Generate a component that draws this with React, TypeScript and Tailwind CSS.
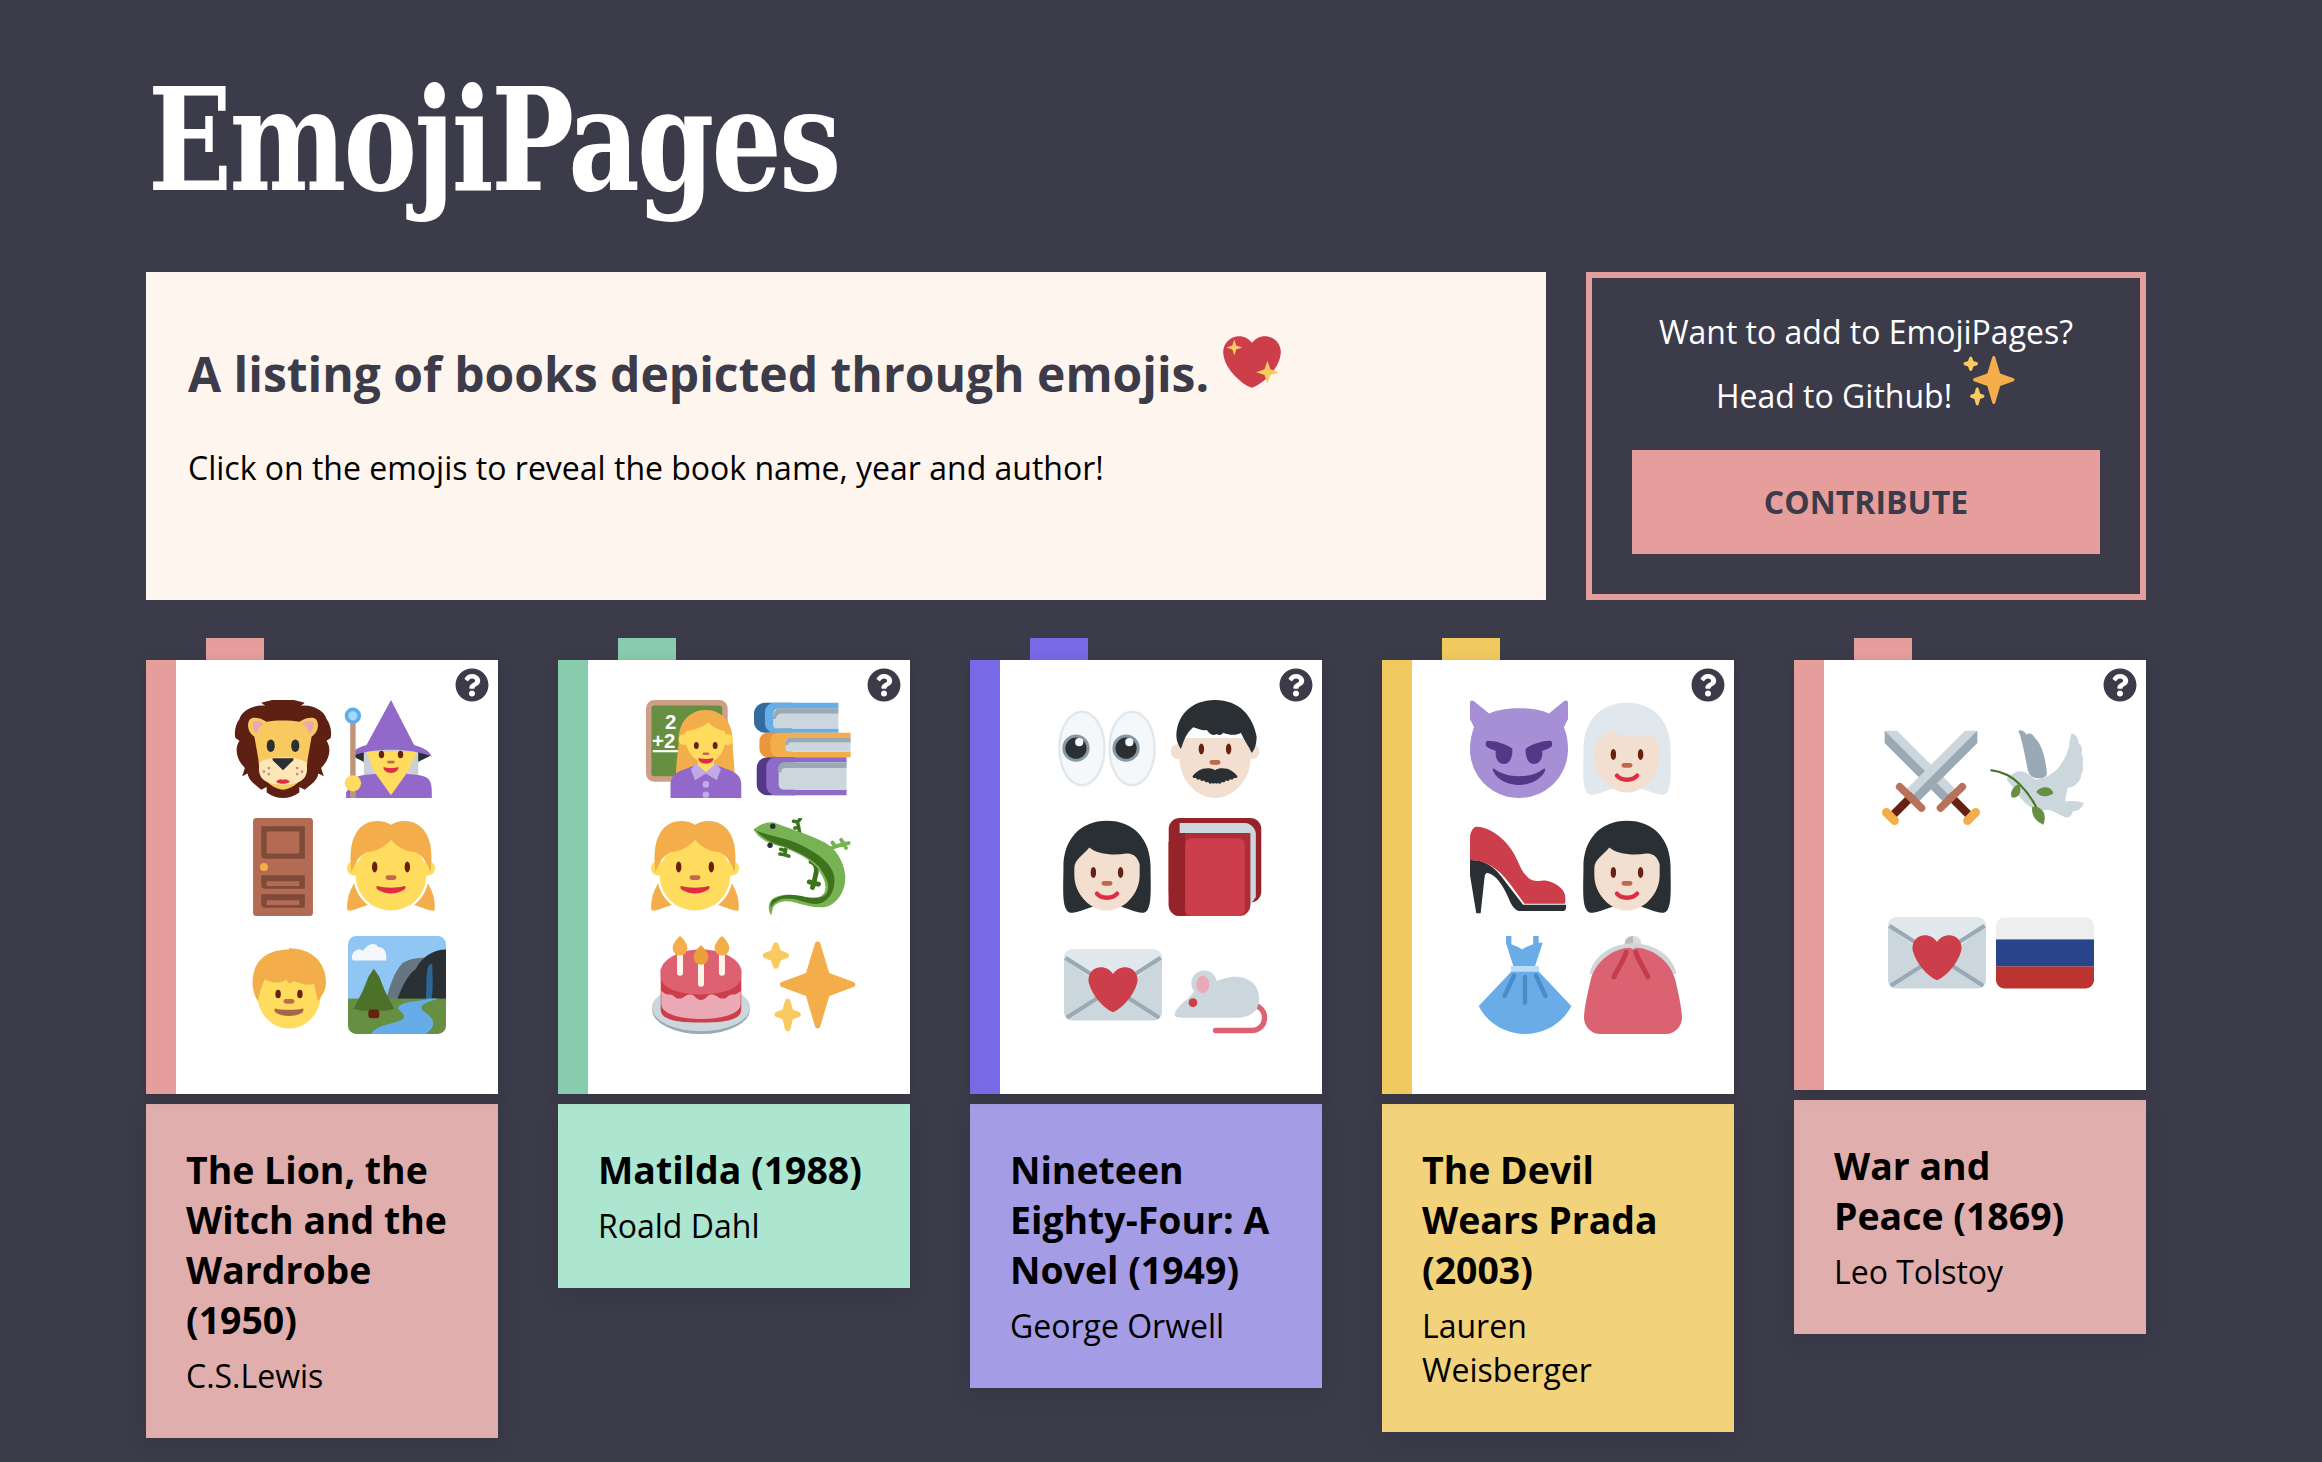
import { FaQuestionCircle } from 'react-icons/fa'
import type { ReactNode } from 'react'

const SKIN = '#F3DFD0'
const YELLOW = '#FFDC5D'
const ORANGE = '#F4AD4B'
const RED = '#CC3E4A'
const GREY = '#CCD6DD'
const DARK = '#292F33'
const BROWN = '#662113'

const bigStar = 'M34.347 16.893l-8.899-3.294-3.323-10.891c-.128-.42-.517-.708-.956-.708-.439 0-.828.288-.956.708l-3.322 10.891-8.9 3.294c-.393.146-.653.519-.653.938 0 .418.26.793.653.938l8.895 3.293 3.324 11.223c.126.424.516.715.959.715.442 0 .833-.291.959-.716l3.324-11.223 8.896-3.293c.391-.144.652-.518.652-.937 0-.418-.261-.792-.653-.938z'
const lowStar = 'M14.347 27.894l-2.314-.856-.9-3.3c-.118-.436-.513-.738-.964-.738-.451 0-.846.302-.965.737l-.9 3.3-2.313.856c-.393.145-.653.52-.653.938 0 .418.26.793.653.938l2.301.853.907 3.622c.112.444.511.756.97.756.459 0 .858-.312.97-.757l.907-3.622 2.301-.853c.393-.144.653-.519.653-.937 0-.418-.26-.793-.653-.938z'
const topStar = 'M10.009 6.231l-2.364-.875-.876-2.365c-.145-.393-.519-.653-.938-.653-.418 0-.792.26-.938.653l-.875 2.365-2.365.875c-.393.146-.653.52-.653.938 0 .418.26.793.653.938l2.365.875.875 2.365c.146.393.52.653.938.653.418 0 .792-.26.938-.653l.875-2.365 2.365-.875c.393-.146.653-.52.653-.938 0-.418-.26-.792-.653-.938z'

const woman = (hair: string) => (
  <>
    <path fill={hair} d="M18 1C8 1 2 8 2 18c0 6-.5 13 1 15.5 1 2 3 1.500 7 0l3-1h10l3 1c4 1.500 6 2 7 0 1.500-2.500 1-9.500 1-15.500C34 8 28 1 18 1z" />
    <path fill={SKIN} d="M11.500 10.800C14 13 20 14 25 13c2 0 4 .5 5 4v4c0 7-6 13-12 13S6 28 6 21v-2.500c0-3.500 3-4.500 5.500-7.700z" />
    <ellipse cx="13" cy="20" rx="1" ry="2" fill={BROWN} />
    <ellipse cx="23" cy="20" rx="1" ry="2" fill={BROWN} />
    <rect x="16" y="23.100" width="4" height="1.800" rx=".9" fill="#C1694F" />
    <path d="M14.300 27.800c1.700 2 5.700 2 7.400 0" fill="none" stroke="#DD2E44" strokeWidth="1.600" strokeLinecap="round" />
  </>
)

const girl = (
  <>
    <path fill={ORANGE} d="M4.500 24C2.500 27 1.600 31 2 34c2 .3 4-1 7.500-2C7 30 5 27 4.500 24z" />
    <path fill={ORANGE} d="M31.500 24c2 3 2.900 7 2.500 10-2 .3-4-1-7.500-2 2.500-2 4.500-5 5-8z" />
    <circle cx="4.500" cy="18.500" r="2.700" fill={YELLOW} />
    <circle cx="31.500" cy="18.500" r="2.700" fill={YELLOW} />
    <ellipse cx="18" cy="21" rx="13" ry="13" fill={YELLOW} />
    <path fill={ORANGE} d="M18 2.500C15 .5 8 0 5 6 3 9 2.800 15 3.500 20 4.500 17 6 14 9 12.500c3 0 6.500-1.500 9-4.500 2.500 3 6 4.500 9 4.500 3 1.500 4.500 4.500 5.500 7.500.7-5 .5-11-1.500-14-3-6-10-5.500-13-3.500z" />
    <ellipse cx="12" cy="18" rx="1" ry="2" fill={BROWN} />
    <ellipse cx="24" cy="18" rx="1" ry="2" fill={BROWN} />
    <rect x="16" y="21" width="4" height="1.800" rx=".9" fill="#C1694F" />
    <path fill="#DD2E44" d="M13 25c2.500.8 7.500.8 10 0 .5 0 .5 1-.2 1.400C20 28.200 16 28.200 13.200 26.400c-.7-.4-.7-1.400-.2-1.400z" />
  </>
)

const letter = (
  <>
    <rect x="0" y="5" width="36" height="26" rx="3" fill={GREY} />
    <path fill="#E1E8ED" d="M3 5h30a3 3 0 0 1 3 3L18 22 0 8a3 3 0 0 1 3-3z" />
    <path d="M.5 8l34.500 22M35.500 8L1 30" stroke="#99AAB5" strokeWidth="1.500" fill="none" />
    <path fill={RED} d="M27 16c0-2.500-2-4.500-4.500-4.500-1.800 0-3.600 1-4.500 2.500-.9-1.500-2.700-2.500-4.500-2.500C11 11.500 9 13.500 9 16c0 .5 0 1 .2 1.500C10.500 22 14.500 26.500 18 28c3.500-1.500 7.500-6 8.800-10.500.2-.5.2-1 .2-1.500z" />
  </>
)

const sword = (
  <>
    <path fill={GREY} d="M1 1h4.500L27 22.500 22.500 27 1 5.500z" />
    <path fill="#99AAB5" d="M1 5.500L22.500 27l2.200-2.200L3.200 3.200 1 1z" />
    <path stroke={BROWN} strokeWidth="3" d="M24.500 24.500l7.500 7.500" />
    <path stroke="#B8725C" strokeWidth="2.800" strokeLinecap="round" d="M21.500 29.400l8-7.800" />
    <path stroke={ORANGE} strokeWidth="3.200" strokeLinecap="round" d="M31.400 34l3-3" />
  </>
)

const emojis: Record<string, ReactNode> = {
  lion: (
    <>
      <path fill="#5F2014" d="M10 1l4-1h8l4 1-1.500 1.200C28 1.500 33 3.500 34 7c1.500 2 2 5 1.500 7L34 15c2 3 1 7-2 10l1 3-2-1c-.5 3-3 4-5 6l-2-1v2c-2 1.500-4 2-6 2s-4-.5-6-2v-2l-2 1c-2-2-4.500-3-5-6l-2 1 1-3C1 22 0 18 2 15L.5 14C0 12 .5 9 2 7c1-3.500 6-5.500 9.500-4.800z" />
      <path fill="#F7C95E" d="M6 7c1-1 4-.5 6 1 3-.6 9-.6 12 0 2-1.500 5-2 6-1 1.500 1.500 1 5-1.500 6.500L27 22c0 5-3 10-9 11-6-1-9-6-9-11L7.500 13.500C5 12 4.500 8.500 6 7z" />
      <path fill="#E8A9B4" d="M7 8c1-.6 3 0 4 .8-1.500.7-2.500 2.200-2.500 3.700C7 11.500 6.500 9 7 8zM29 8c-1-.6-3 0-4 .8 1.500.7 2.500 2.200 2.500 3.700C29 11.500 29.500 9 29 8z" />
      <path fill="#FDE7B7" d="M18 21c-3 0-7 .5-8.500 2-.9 3 0 6 2.500 7 2 1 4 1 6 1s4 0 6-1c2.500-1 3.400-4 2.500-7-1.500-1.500-5.500-2-8.500-2z" />
      <ellipse cx="13.500" cy="16.800" rx="1.500" ry="2.300" fill={DARK} />
      <ellipse cx="22.500" cy="16.800" rx="1.500" ry="2.300" fill={DARK} />
      <path fill={DARK} d="M14.500 21.400h7c.4 0 .5.500.2.800L18 25.800l-3.700-3.600c-.3-.3-.2-.8.2-.8z" />
      <path fill="#DD2E44" d="M15.500 30c1-1 2-1 2.500-.6.500-.4 1.500-.4 2.500.6-1 1-4 1-5 0z" />
      <g fill="#C98A7A">
        <circle cx="11" cy="26.300" r=".5" /><circle cx="12.800" cy="25" r=".5" /><circle cx="12.800" cy="27.200" r=".5" />
        <circle cx="25" cy="26.300" r=".5" /><circle cx="23.200" cy="25" r=".5" /><circle cx="23.200" cy="27.200" r=".5" />
      </g>
    </>
  ),
  wizard: (
    <>
      <path fill={DARK} d="M5 18.500h26l1.500 2-5 2.500H8.500l-5-2.500z" />
      <path fill="#CCD0D4" d="M8 17h20v11H8z" />
      <path fill="#9268CA" d="M5 28.500c2-1 5-1.300 8-1.300h10c3 0 6 .3 8 1.300 2 1.200 2 3.500 2 7.500H1.500v-2L5 28.500z" />
      <path fill={YELLOW} d="M9 19h18.500L24 26.500 18 35l-6-8.500z" />
      <path fill="#9268CA" d="M18 0l8.500 16.500c3 .8 6 2.500 6.500 4.300-4-1.500-9-2.500-15-2.500s-11 1-15 2.500C3.500 19 5.500 17.500 9 16.500z" />
      <rect x="3" y="7" width="2" height="29" fill="#C1957B" />
      <circle cx="4" cy="5.800" r="3" fill="#5DADEC" />
      <circle cx="4" cy="5.800" r="1.700" fill="#A5D8FA" />
      <circle cx="4" cy="30.600" r="3" fill={YELLOW} />
      <ellipse cx="14.500" cy="20" rx="1" ry="1.400" fill={BROWN} />
      <ellipse cx="21.500" cy="20" rx="1" ry="1.400" fill={BROWN} />
      <rect x="16.600" y="22.300" width="2.800" height="1" rx=".5" fill="#C1694F" />
      <path fill="#DD2E44" d="M15.300 24.600c1.500.5 4 .5 5.400 0 .3 1-1 2.200-2.700 2.200s-3-1.200-2.700-2.200z" />
    </>
  ),
  door: (
    <>
      <rect x="7" y="0" width="22" height="36" rx="1.200" fill="#B36B54" />
      <path fill="#7F4A38" d="M10 3h16v12H11.500a1.500 1.500 0 0 1-1.500-1.500zM10 21h16v5H11.500a1.500 1.500 0 0 1-1.500-1.500zM10 28h16v5H11.500a1.500 1.500 0 0 1-1.500-1.500z" />
      <path fill="#B36B54" d="M12 5h12v8H12zM12 23.200h12v1.800H12zM12 30.200h12v1.800H12z" />
      <circle cx="11" cy="18" r="1.500" fill={ORANGE} />
    </>
  ),
  girl,
  boy: (
    <>
      <ellipse cx="18" cy="21.500" rx="11.700" ry="12.500" fill={YELLOW} />
      <path fill={ORANGE} d="M18 5C9 5 4.600 10 4.600 17c0 3 1 5.500 2 7 .5-3 1.500-6 2.500-8 3 1.500 6 1.500 8 0 .5 2 2 1.500 2.500.5 2.500.8 5.500 2 7.500 1 .7 2.500 1.200 4.500 1.500 6.500 1.500-2 3-4 3-7 0-7-5-12.500-13.600-12.500z" />
      <ellipse cx="14" cy="21.300" rx="1" ry="1.600" fill={BROWN} />
      <ellipse cx="22" cy="21.300" rx="1" ry="1.600" fill={BROWN} />
      <rect x="16" y="23.100" width="4" height="1.800" rx=".9" fill="#C1694F" />
      <path fill="#A8654D" d="M13 26.600c2 .7 8 .7 10 0 .5 0 .4 1-.2 1.600-2.800 1.600-6.800 1.600-9.600 0-.6-.6-.7-1.600-.2-1.600z" />
    </>
  ),
  scenery: (
    <>
      <clipPath id="scenery-clip"><rect width="36" height="36" rx="3" /></clipPath>
      <g clipPath="url(#scenery-clip)">
        <rect width="36" height="24" fill="#8FC6F4" />
        <path fill="#F5F8FA" d="M2 9c-1 0-1-3 1.500-4 1 0 1.500 0 2 .5C7 3 10 2 11 4c2 0 3.500 1.500 3 5z" />
        <path fill="#66757F" d="M14 24c1-5 3-11 6-14 3-2 7-2 9-2v16z" />
        <path fill={DARK} d="M18 24c1-4 4-10 7-12 2-4 6-7 11-7v19z" />
        <path fill="#2A6797" d="M28.500 24c.5-5 0-10 1-13 .5-1 1.500-1 1.500 0 0 4 .5 9-.5 13z" />
        <rect y="23" width="36" height="13" fill="#678F42" />
        <path fill="#4C7229" d="M9.500 12l2 3 1 2.500 1 2.500 1.500 3 2 3.700-3 .8H5l-3-.8L4 23l1.500-3 1-2.500 1-2.500z" />
        <rect x="7.500" y="27" width="4" height="3.200" rx="1" fill={BROWN} />
        <path fill="#66ADE7" d="M30 23c-3 1-9 1-11 2.500s2 2.500 1.500 4.500-10 2-12 6h20c3-2 3.500-4 2-6s-4-2.500-3.500-4 4-2 6-3z" />
      </g>
    </>
  ),
  teacher: (
    <>
      <rect width="30" height="30" rx="3" fill="#CF9E86" />
      <rect x="2" y="2" width="26" height="26" rx="1" fill="#678F42" />
      <text x="7" y="10.500" fontFamily="Liberation Sans" fontWeight="700" fontSize="7.500" fill="#fff">2</text>
      <text x="2.200" y="17.500" fontFamily="Liberation Sans" fontWeight="700" fontSize="7.500" fill="#fff">+2</text>
      <rect x="2.500" y="18.400" width="10" height=".8" fill="#fff" />
      <path fill={ORANGE} d="M22 3.700c-6.500 0-10 5-10 11 0 3-1 9-1 12.300h21.500c0-3-.7-9-.7-12.300 0-6-3.500-11-9.800-11z" />
      <circle cx="14" cy="14.500" r="2" fill={YELLOW} />
      <circle cx="30" cy="14.500" r="2" fill={YELLOW} />
      <path fill="#9268CA" d="M9 36v-5c0-3 2-4.500 5-5.500l4-1.500h8l4 1.500c3 1 5 2.500 5 5.500v5z" />
      <path fill="#C1A9E8" d="M16.500 25.500l2-2.500 3.500 3 3.500-3 2 2.500-1.500 4-4-2.500-4 2.500z" />
      <path fill={YELLOW} d="M19 21h6v3l-3 2.500-3-2.500z" />
      <path fill={YELLOW} d="M14.500 11.500C18 11 22 9.500 23 8c1 2 4 3 6 3.500V15c0 4-3 8-7 8s-7-4-7.500-8z" />
      <ellipse cx="18.500" cy="16.700" rx=".9" ry="1.300" fill={BROWN} />
      <ellipse cx="25.400" cy="16.700" rx=".9" ry="1.300" fill={BROWN} />
      <rect x="20.800" y="19.300" width="2.400" height=".9" rx=".4" fill="#C1694F" />
      <path fill="#DD2E44" d="M19.300 21.300c1.700.5 3.700.5 5.400 0 .3 1-1.100 2.100-2.700 2.100s-3-1.100-2.700-2.100z" />
      <circle cx="22" cy="31" r="1.200" fill="#C1A9E8" />
      <circle cx="22" cy="34.800" r="1.200" fill="#C1A9E8" />
    </>
  ),
  books: (
    <>
      <path fill="#336B9C" d="M4 1h10v11H4a4 4 0 0 1-4-4V5a4 4 0 0 1 4-4z" />
      <path fill="#65AEE8" d="M7 1h24v2H9a2 2 0 0 0-2 2v3.500a2 2 0 0 0 2 2h22V12H7a3.500 3.500 0 0 1-3-3.500V4.500A3.500 3.500 0 0 1 7 1z" />
      <path fill={GREY} d="M9 3h22v7.500H8a1.500 1.500 0 0 1-1-1.500V5a2 2 0 0 1 2-2z" />
      <path fill="#99AAB5" d="M9 3h22v2H10a2 2 0 0 0-2 2H7a4 4 0 0 1 2-4z" />
      <path fill="#E9973A" d="M5 12h9v9H5a3 3 0 0 1-3-3v-3a3 3 0 0 1 3-3z" />
      <path fill={ORANGE} d="M9 12h26.500v2H13a1.500 1.500 0 0 0-1.500 1.500v2A1.500 1.500 0 0 0 13 19h22.500v2H9a3 3 0 0 1-3-3v-3a3 3 0 0 1 3-3z" />
      <path fill={GREY} d="M13 14h22.500v5H13a1.500 1.500 0 0 1-1.500-1.500v-2A1.500 1.500 0 0 1 13 14z" />
      <path fill="#99AAB5" d="M13 14h22.500v1.500H13.500a1 1 0 0 0-1 1h-1c0-1.200.5-2.500 1.500-2.500z" />
      <path fill="#553788" d="M5 21h10v14H5a4 4 0 0 1-4-4v-6a4 4 0 0 1 4-4z" />
      <path fill="#8F6BC8" d="M8 21h26v2H11a2 2 0 0 0-2 2v6a2 2 0 0 0 2 2h23v2H8a3.500 3.500 0 0 1-3.500-3.500v-7A3.500 3.500 0 0 1 8 21z" />
      <path fill={GREY} d="M11 23h23v10H11a2 2 0 0 1-2-2v-6a2 2 0 0 1 2-2z" />
      <path fill="#99AAB5" d="M11 23h23v2H11.500a1.500 1.500 0 0 0-1.500 1.500H9V25a2 2 0 0 1 2-2z" />
    </>
  ),
  lizard: (
    <>
      <g stroke="#3E721D" strokeWidth="1.300" strokeLinecap="round" fill="none">
        <path d="M17 6.500L16 1.500M16 1.500l-1.500-.3M16 1.500l1-1.200M16.500 3.500l-1.500.2" />
        <path d="M12 10l-.7 3.500M11.300 13.500l-1.800-.3M11.300 13.500l1.500.5M11.500 12l-1.700-.5" />
      </g>
      <g stroke="#77B255" strokeWidth="1.400" strokeLinecap="round" fill="none">
        <path d="M27 11.500l6-2M33 9.500l-1-1.500M33 9.500l1.800-.3M33 9.500l.8 1.500M30 10.500l-1.200-1.500" />
      </g>
      <path stroke="#3E721D" strokeWidth="1.800" strokeLinecap="round" fill="none" d="M21 16c2.500 1 2 4 1.500 5.500L22 24M22 24l-1.700-.5M22 24l1.700.3M22 24l-.5 1.500" />
      <path fill="#77B255" d="M0 4.400C1 3 4 1.400 7 1.600c5 1.900 13 4.400 19 7.400 4 2 7 7 7.500 12 .5 5-2.500 10-6.500 11.500-4 1-8-.5-12-1.500-4-1-7 0-8 2l-.7 2.800C5 34 5 31 7 29.600c3-2 7-1.600 11-.6 4 .6 7 .6 8-2 1-3-1-6-3-9-4-4-9-6-13-7.500C6 9.500 2 8 0 4.400z" />
      <path fill="#3E721D" d="M0 4.400c5 2 12 3 17 5.400 6 2.800 12 7 12.500 12 .5 5-2 8.500-5 9.500-3.500 1-7-1-10-1.500-4-.7-7 .5-8.300 3.200-.3-1.500.3-3.200 1.800-3.400 3-2 7-1.600 11-.6 4 .6 7 .6 8-2 1-3-1-6-3-9-4-4-9-6-13-7.500-4-1-8-3-11-6.600z" />
      <circle cx="6.900" cy="3" r="1" fill={DARK} />
      <circle cx="5.900" cy="10" r="1" fill={DARK} />
    </>
  ),
  cake: (
    <>
      <ellipse cx="18" cy="27" rx="18" ry="9" fill="#99AAB5" />
      <ellipse cx="18" cy="26.300" rx="18" ry="8.700" fill={GREY} />
      <path fill="#CC3E4A" d="M3.200 12v15c0 4 6.500 4.800 14.800 4.800S32.800 31 32.800 27V12z" />
      <path fill="#EAA9B5" d="M3.400 20c0 0 1 1.500 3 1.500S8 23 10 23s2-1.500 4-1.500 2 2 4 2 2-2 4-2 2 1.500 4 1.500 1.600-1.500 3.600-1.500 3-1.500 3-1.500V25c0 3.500-6.500 5.500-14.600 5.500S3.400 28.500 3.400 25z" />
      <path fill="#DD6170" d="M3.200 13v2c0 4 6.500 6.500 14.800 6.500s14.800-2.500 14.800-6.500v-2c0-4-6.500-8-14.800-8S3.200 9 3.200 13z" />
      <path stroke="#FFF5EA" strokeWidth="2.200" strokeLinecap="round" d="M10.300 6.500v7M18 9.500v8M25.700 6.500v7" />
      <path fill={ORANGE} d="M10.300 0c1.500 1.300 2.700 3 2.700 4.500a2.700 2.700 0 0 1-5.400 0C7.600 3 8.800 1.300 10.300 0zM25.700 0c1.500 1.300 2.700 3 2.700 4.500a2.700 2.700 0 0 1-5.400 0c0-1.500 1.200-3.200 2.700-4.500z" />
      <path fill="#E9A13A" d="M18 3.400c1.500 1.300 2.700 3 2.700 4.500a2.700 2.700 0 0 1-5.400 0c0-1.500 1.200-3.200 2.700-4.500z" />
    </>
  ),
  sparkles: (
    <>
      <path fill={ORANGE} d={bigStar} />
      <path fill="#F9CA5F" d={lowStar} />
      <path fill="#F9CA5F" d={topStar} />
    </>
  ),
  eyes: (
    <>
      <ellipse cx="8.800" cy="17.800" rx="8.300" ry="13.500" fill="#F5F8FA" stroke="#E1E8ED" strokeWidth=".9" />
      <ellipse cx="27.200" cy="17.800" rx="8.300" ry="13.500" fill="#F5F8FA" stroke="#E1E8ED" strokeWidth=".9" />
      <circle cx="6.600" cy="17.700" r="5" fill="#8899A6" />
      <circle cx="25" cy="17.700" r="5" fill="#8899A6" />
      <circle cx="6.600" cy="17.700" r="3.900" fill={DARK} />
      <circle cx="25" cy="17.700" r="3.900" fill={DARK} />
      <circle cx="7.800" cy="15.500" r="1.500" fill="#F5F8FA" />
      <circle cx="26.200" cy="15.500" r="1.500" fill="#F5F8FA" />
    </>
  ),
  man: (
    <>
      <circle cx="4.500" cy="19" r="2.800" fill={SKIN} />
      <circle cx="31.500" cy="19" r="2.800" fill={SKIN} />
      <path fill={SKIN} d="M5 14h26v8c0 7-6 14-13 14S5 29 5 22z" />
      <path fill={DARK} d="M18 0C9 0 4 6 3.800 13c0 2 .7 3.500 1.700 5 1-3 2-6 4.500-8 2 .5 3.500 1.500 5 1 1 1.500 2.500 2.500 3.500 1.500.5.5 2 .5 2.500-.5 2.500 1 5 1 6.500 0 1 2.500 3 5 4 7.500 1.200-1.500 1.800-3.500 1.800-6C32 6 27 0 18 0z" />
      <ellipse cx="13" cy="18" rx="1" ry="2" fill={BROWN} />
      <ellipse cx="23" cy="18" rx="1" ry="2" fill={BROWN} />
      <rect x="16" y="22" width="4" height="1.800" rx=".9" fill="#C1694F" />
      <path fill={DARK} d="M18 25.800c1-.8 3-.9 4.500-.5 1.500.5 2.800 1.500 3.700 2.600.2.700-.5.900-1.200.7-.4.900-1 .8-1.500.4-.3.900-1 .9-1.500.5-.3.900-1 .9-1.500.5-.3.900-1 .9-1.400.4-.3.500-.8.500-1.100 0-.3.500-.8.500-1.100 0-.4.500-1.100.500-1.400-.4-.5.400-1.200.4-1.500-.5-.5.400-1.200.4-1.500-.5-.5.400-1.100.5-1.500-.4-.7.200-1.400 0-1.200-.7.900-1.100 2.200-2.100 3.700-2.600 1.500-.4 3.500-.3 4.500.5z" />
    </>
  ),
  woman: woman(DARK),
  grey: woman('#E1E8ED'),
  book: (
    <>
      <rect x="1" y="0" width="34" height="31" rx="4" fill="#96222A" />
      <path fill={GREY} d="M5 1.800h24c2 0 4 2 4 4V29l-2 3H5z" />
      <path fill="#AD2E38" d="M5 5.500h26v26.500a4 4 0 0 1-4 4H5a4 4 0 0 1-4-4V9a4 4 0 0 1 4-3.500z" />
      <rect x="7" y="7.400" width="22" height="28.600" rx="2.500" fill={RED} />
      <path fill="#96222A" d="M5 5.500h2V36H5a4 4 0 0 1-4-4V9a4 4 0 0 1 4-3.500z" />
    </>
  ),
  letter,
  mouse: (
    <>
      <path fill="none" stroke="#DD6170" strokeWidth="2" strokeLinecap="round" d="M31.500 25.800c2.500 1.500 3 4 2 6.500-1 1.500-2.500 2.400-4 2.400H16" />
      <path fill={GREY} d="M1 29c0 .7 1 1 3 1h20c5 0 8-2.500 8-7s-3-8-9-8c-2 0-5 1-8 2-4 1-7 3-9 6-3 2-5 4.500-5 6z" />
      <circle cx="11.800" cy="17.400" r="4.700" fill={GREY} />
      <ellipse cx="11.300" cy="17.800" rx="2.400" ry="3.200" fill="#EAA9B5" />
      <circle cx="7.700" cy="24.500" r="1.600" fill={RED} />
    </>
  ),
  devil: (
    <>
      <path fill="#A68FD4" d="M0 1C0 .3.500-.2 1.500.5L7 5c3-1.500 7-2 11-2s8 .5 11 2l5.500-4.500C35.500-.2 36 .3 36 1v6l-1.500 3c1 2.500 1.500 5 1.500 8 0 10-8 18-18 18S0 28 0 18c0-3 .5-5.500 1.500-8L0 7z" />
      <path fill="#553788" d="M6.500 15c3 0 6.500 1.200 9 2.800.3 2.200-.5 5.700-3 5.700-2.300 0-3.400-2.500-3-4.800-1.500-.6-3-1-3.500-1.700-.5-1 0-2 .5-2zM29.500 15c-3 0-6.500 1.200-9 2.800-.3 2.200.5 5.700 3 5.700 2.300 0 3.400-2.500 3-4.800 1.500-.6 3-1 3.500-1.700.5-1 0-2-.5-2zM8.800 25.200c2.500 2 5.500 2.800 9.200 2.800s6.700-.8 9.200-2.800c.5-.3.500.5.300 1C25.800 29.500 22 31.200 18 31.200s-7.800-1.700-9.500-5c-.2-.5-.2-1.300.3-1z" />
    </>
  ),
  heel: (
    <>
      <path fill={DARK} d="M0 15.400c5 0 9 2 13 8l6.500 8.500h15.700c.3 1 0 2-.7 2.300H18.500c-1.500 0-3-1.500-4-4-2-5-5-9.500-8-10-.8 0-1 .5-1.200 2L3.900 35H2.300L0 21z" />
      <path fill={RED} d="M2.500 3.200C6 3 12 6.500 15.500 12c2 3 3 7 5 9 2 2.500 4.500 2.200 6.500 2 3 0 8 2.700 8 6 0 1 .2 1.800-.2 2.500H20L16 26c-4-6-9-10.500-16-10.600v-8c0-2 1-4.200 2.500-4.200z" />
    </>
  ),
  dress: (
    <>
      <path fill="#69ACE8" d="M11 0h2v3c1 .5 3 1 4 2 1-1 3-1.500 4-2V0h2v2.500h1.500L21.700 11H13.700L11 2.500z" />
      <rect x="12.800" y="11" width="10.400" height="2" fill="#BBDDF5" />
      <path fill="#69ACE8" d="M13 13h10l12 12.700C32 32 25 36 18 36S4 32 1 25.700z" />
      <path stroke="#4A8CC8" strokeWidth="1.600" strokeLinecap="round" fill="none" d="M18 15v9.500M14 14.500L10.500 22M22 14.500L25.500 22" />
    </>
  ),
  purse: (
    <>
      <path fill="#B8BCC0" d="M15 2.500c0-1.200 1.200-2.500 3-2.500v3h-3z" />
      <path fill="#D9DDE0" d="M18 0c1.800 0 3 1.300 3 2.500V3h-3z" />
      <path fill="#D1D5D8" d="M2 14C3 9 8 3 18 2.700 28 3 33 9 34 14z" />
      <path fill="#DB6270" d="M2.500 16C4 10 10 4.500 17 4.300L18 5l1-.7C26 4.500 32 10 33.500 16c1 4 2.500 11 2.500 14 0 3-2.500 6-6 6H6c-3.500 0-6-3-6-6 0-3 1.500-10 2.500-14z" />
      <path stroke="#C63C4A" strokeWidth="1.800" strokeLinecap="round" fill="none" d="M15.500 6c-1 3-3 6-4.500 9M19 6c1 3 3 6 4.500 9" />
    </>
  ),
  swords: (
    <>
      <g fill="none">{sword}</g>
      <g fill="none" transform="translate(36 0) scale(-1 1)">{sword}</g>
    </>
  ),
  dove: (
    <>
      <path fill="#99AAB5" d="M10.400 1c1.500-.5 2.500.5 3 1.500.8-1 2.200-.5 3 1 3 3 4 8 4.500 13 0 1.500-1.500 2-3 2-2 0-3.500-1-4-3-1-5-2-11-3.500-14.500z" />
      <path fill={GREY} d="M30 2c1.500 0 2.500 2 2.500 3.500 1.500 1 1.500 3 1 4 1 1 .5 3 .5 4 .5 1 0 3-.5 3.500 0 3-3 5-5 5l-1 5c3-.5 5 0 7 .5-1 3-3 3-4 3-.5 2-2 3-3.500 2-2.500-1-4-2.500-6-2.500-2 .5-5 0-7-1.500C11 26 9.500 23 7 20c-1-1-1-2 0-2 1-1 3-2.500 5-2 2 .5 3 2 5 3 6-1 10-5 12-12 .2-2 .5-4 1-5z" />
      <path stroke="#4B7328" strokeWidth=".8" fill="none" d="M.2 15.500c4 .5 8 2.500 10.500 5 3 3 5 6 6.500 9" />
      <path fill="#678F42" d="M8 25.500c-1-2 1-4.500 2.800-5 .8 2 .5 5.500-2.800 5zM17 23.500c1-1.500 4-2.500 5.500-.8 .7.500 1 1.500.4 1.500-2.500 1.500-4.500 1-5.900-.7zM15.500 29c1.500-.8 4.500 1 4.500 3 .3 1 0 3-.5 3.500-2-.8-4.500-3-4-6.500z" />
    </>
  ),
  russia: (
    <>
      <path fill="#EEEEEE" d="M3 5h30a3 3 0 0 1 3 3v5H0V8a3 3 0 0 1 3-3z" />
      <rect y="13" width="36" height="10" fill="#28448A" />
      <path fill="#BC342F" d="M0 23h36v5a3 3 0 0 1-3 3H3a3 3 0 0 1-3-3z" />
    </>
  ),
  heart: (
    <>
      <path fill={RED} d="M35.885 11.833c0-5.45-4.418-9.868-9.867-9.868-3.308 0-6.227 1.633-8.018 4.129-1.791-2.496-4.71-4.129-8.017-4.129-5.45 0-9.868 4.417-9.868 9.868 0 .772.098 1.52.266 2.241C1.751 22.587 11.216 31.568 18 34.034c6.783-2.466 16.249-11.447 17.617-19.959.17-.721.268-1.469.268-2.242z" />
      <path fill="#F9CA5F" d="M7 4l1.200 3.800 3.800 1.200-3.800 1.200L7 14l-1.200-3.800L2 9l3.800-1.200zM27.600 17.300l1.800 5.200 5.200 1.800-5.200 1.800-1.800 5.200-1.800-5.200-5.200-1.800 5.200-1.800z" />
    </>
  ),
}

function Emoji({ name, className = 'w-[98px] h-[98px]' }: { name: string; className?: string }) {
  return (
    <svg viewBox="0 0 36 36" className={className}>
      {emojis[name]}
    </svg>
  )
}

const books = [
  {
    title: 'The Lion, the Witch and the Wardrobe (1950)',
    author: 'C.S.Lewis',
    accent: 'bg-[#e59e9b]',
    label: 'bg-[#e0afad]',
    rows: [['lion', 'wizard'], ['door', 'girl'], ['boy', 'scenery']],
  },
  {
    title: 'Matilda (1988)',
    author: 'Roald Dahl',
    accent: 'bg-[#87ccac]',
    label: 'bg-[#ace6d0]',
    rows: [['teacher', 'books'], ['girl', 'lizard'], ['cake', 'sparkles']],
  },
  {
    title: 'Nineteen Eighty-Four: A Novel (1949)',
    author: 'George Orwell',
    accent: 'bg-[#786ae6]',
    label: 'bg-[#a59ce6]',
    rows: [['eyes', 'man'], ['woman', 'book'], ['letter', 'mouse']],
  },
  {
    title: 'The Devil Wears Prada (2003)',
    author: 'Lauren Weisberger',
    accent: 'bg-[#f0ca5e]',
    label: 'bg-[#f2d27a]',
    rows: [['devil', 'grey'], ['heel', 'woman'], ['dress', 'purse']],
  },
  {
    title: 'War and Peace (1869)',
    author: 'Leo Tolstoy',
    accent: 'bg-[#e59e9b]',
    label: 'bg-[#e0afad]',
    rows: [['swords', 'dove'], ['letter', 'russia']],
  },
]

function BookCard({ book }: { book: (typeof books)[number] }) {
  const short = book.rows.length === 2
  return (
    <div className="flex flex-col">
      <div className={`ml-[60px] w-[58px] h-[22px] ${book.accent}`} />
      <div className={`relative z-10 flex bg-white shadow-[0_4px_14px_rgba(0,0,0,0.12)] ${short ? 'h-[430px]' : 'h-[434px]'}`}>
        <div className={`w-[30px] ${book.accent}`} />
        <div className={`flex-1 flex flex-col ${short ? 'pt-[68px] gap-[78px]' : 'pt-[40px] gap-[20px]'}`}>
          {book.rows.map((row, i) => (
            <div key={i} className={`flex justify-center gap-[10px] ${i === book.rows.length - 1 ? 'pl-[12px]' : ''}`}>
              {row.map((name, j) => <Emoji key={j} name={name} />)}
            </div>
          ))}
        </div>
        <FaQuestionCircle className="absolute top-[8px] right-[9px] text-[#3c3b4a]" size={34} />
      </div>
      <div className={`mt-[10px] px-[40px] pt-[41px] pb-[40px] text-black shadow-[0_6px_20px_rgba(0,0,0,0.1)] ${book.label}`}>
        <h3 className="text-[37.44px] leading-[50px] font-bold mb-[9px]">{book.title}</h3>
        <p className="text-[32px] leading-[44px]">{book.author}</p>
      </div>
    </div>
  )
}

export default function App() {
  return (
    <div className="min-h-screen h-[1462px] overflow-hidden bg-[#3c3b4a] font-['Open_Sans',sans-serif]">
      <div className="w-[2000px] ml-[146px]">
        <h1 className="h-[272px] pt-[60px] ml-[2px] origin-left scale-x-[0.857] text-white text-[143px] leading-[160px] font-bold font-['DejaVu_Serif',serif] [font-stretch:condensed] tracking-[-3px]">EmojiPages</h1>

        <div className="flex gap-[40px] h-[328px]">
          <div className="w-[1400px] bg-[#fff5ef] pl-[42px] pt-[70px]">
            <h2 className="text-[48px] leading-[64px] font-bold text-[#3c3b4a]">
              A listing of books depicted through emojis.
              <Emoji name="heart" className="inline-block w-[58px] h-[58px] -mt-[58px] ml-[14px] align-[1px]" />
            </h2>
            <p className="mt-[40px] text-[32px] leading-[44px] text-black">Click on the emojis to reveal the book name, year and author!</p>
          </div>

          <div className="w-[560px] border-[6px] border-[#e59e9b] px-[40px] pt-[22px] text-center text-white">
            <p className="text-[32px] leading-[64px]">Want to add to EmojiPages?</p>
            <p className="text-[32px] leading-[64px]">
              Head to Github!
              <Emoji name="sparkles" className="inline-block w-[54px] h-[54px] -mt-[53px] ml-[10px] align-[1px]" />
            </p>
            <div className="mt-[22px] h-[104px] bg-[#e59e9b] flex items-center justify-center text-[#3c3b4a] text-[32px] font-bold">CONTRIBUTE</div>
          </div>
        </div>

        <div className="mt-[38px] grid grid-cols-5 gap-[60px] items-start">
          {books.map((b, i) => <BookCard key={i} book={b} />)}
        </div>
      </div>
    </div>
  )
}
